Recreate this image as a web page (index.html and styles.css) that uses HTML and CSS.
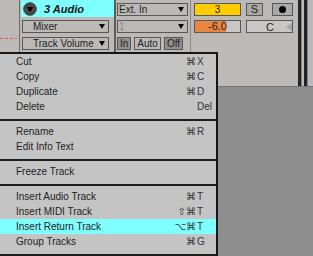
FILE: index.html
```html
<!DOCTYPE html>
<html lang="en">
<head>
    <meta charset="UTF-8">
    <meta name="viewport" content="width=device-width, initial-scale=1.0">
    <title>Track Context Menu</title>
    <link rel="stylesheet" href="styles.css">
</head>
<body>
    <div class="top">
        <div class="gutter">
            <div class="dashes"></div>
        </div>

        <div class="track">
            <div class="track-head">
                <svg class="fold" width="14" height="14" viewBox="0 0 14 14">
                    <circle cx="7" cy="7" r="6.3" fill="#4a4a4a" stroke="#2a2a2a" stroke-width="0.8"/>
                    <path d="M3.6 5 L10.4 5 L7 10 Z" fill="#000"/>
                </svg>
                <span class="track-name">3 Audio</span>
            </div>
            <div class="dd dd-indent">Mixer<span class="arrow"></span></div>
            <div class="dd dd-indent">Track Volume<span class="arrow"></span></div>
        </div>

        <div class="io">
            <div class="dd">Ext. In<span class="arrow"></span></div>
            <div class="dd dd-off">1<span class="arrow"></span></div>
            <div class="monitor">
                <span class="mon-btn mon-on">In</span>
                <span class="mon-btn">Auto</span>
                <span class="mon-btn mon-on">Off</span>
            </div>
        </div>

        <div class="mix">
            <div class="mix-row">
                <div class="num">3</div>
                <div class="btn solo">S</div>
                <div class="btn rec"><span class="dot"></span></div>
            </div>
            <div class="mix-row">
                <div class="vol" style="--fill: 68%">-6.0</div>
                <div class="pan">C<span class="pan-tri"></span></div>
            </div>
        </div>

        <div class="meter">
            <div class="bar"></div>
            <div class="bar"></div>
        </div>
    </div>

    <div class="menu">
        <div class="item"><span class="label">Cut</span><span class="mods">⌘</span><span class="key">X</span></div>
        <div class="item"><span class="label">Copy</span><span class="mods">⌘</span><span class="key">C</span></div>
        <div class="item"><span class="label">Duplicate</span><span class="mods">⌘</span><span class="key">D</span></div>
        <div class="item"><span class="label">Delete</span><span class="mods"></span><span class="key">Del</span></div>
        <div class="sep"></div>
        <div class="item"><span class="label">Rename</span><span class="mods">⌘</span><span class="key">R</span></div>
        <div class="item"><span class="label">Edit Info Text</span></div>
        <div class="sep"></div>
        <div class="item"><span class="label">Freeze Track</span></div>
        <div class="sep"></div>
        <div class="item"><span class="label">Insert Audio Track</span><span class="mods">⌘</span><span class="key">T</span></div>
        <div class="item"><span class="label">Insert MIDI Track</span><span class="mods">⇧⌘</span><span class="key">T</span></div>
        <div class="item active"><span class="label">Insert Return Track</span><span class="mods">⌥⌘</span><span class="key">T</span></div>
        <div class="item"><span class="label">Group Tracks</span><span class="mods">⌘</span><span class="key">G</span></div>
        <div class="sep"></div>
    </div>
</body>
</html>
```

FILE: styles.css
```css
* {
    box-sizing: border-box;
}
body {
    margin: 0;
    width: 313px;
    height: 256px;
    overflow: hidden;
    position: relative;
    background-color: #8e8e8e;
    font-family: "Liberation Sans", Arial, "DejaVu Sans", sans-serif;
    font-size: 10px;
    color: #1e1e1e;
}
.top {
    display: flex;
    height: 87px;
    background-color: #bdb9b6;
    border-bottom: 1px solid #767676;
}
.gutter {
    width: 20px;
    border-right: 1px solid #6c6c6c;
    padding-top: 38px;
}
.dashes {
    width: 17px;
    height: 1px;
    background: repeating-linear-gradient(90deg, #e35a5a 0 3px, transparent 3px 5px);
}
.track {
    width: 96px;
    padding-left: 1px;
    border-right: 2px solid #5c5c5c;
}
.track-head {
    display: flex;
    align-items: center;
    height: 17px;
    background-color: #80ffff;
    padding-left: 2px;
}
.track-name {
    margin-left: 7px;
    font-size: 11px;
    font-weight: bold;
    font-style: italic;
    color: #111;
}
.dd {
    display: flex;
    align-items: center;
    height: 13px;
    margin-top: 4px;
    margin-left: 1px;
    width: 71px;
    padding: 0 3px 0 1px;
    border: 1px solid #585858;
    line-height: 11px;
}
.io .dd:first-child {
    margin-top: 3px;
}
.track .dd {
    margin-left: 1px;
    width: 87px;
    margin-top: 3px;
}
.track .dd + .dd {
    margin-top: 4px;
}
.dd-indent {
    padding-left: 10px;
}
.arrow {
    margin-left: auto;
    width: 0;
    height: 0;
    border-left: 3.5px solid transparent;
    border-right: 3.5px solid transparent;
    border-top: 5px solid #000;
}
.dd-off {
    color: #8a8886;
}
.io {
    width: 75px;
    border-right: 1px solid #8c8986;
}
.monitor {
    display: flex;
    gap: 3px;
    margin: 4px 0 0 1px;
}
.mon-btn {
    height: 13px;
    line-height: 11px;
    padding: 0 2px;
    border: 1px solid #585858;
}
.mon-on {
    background-color: #8f8f8f;
}
.mix {
    width: 107px;
    padding: 3px 0 0 3px;
}
.mix-row {
    display: flex;
    gap: 5px;
    margin-bottom: 4px;
}
.num {
    width: 47px;
    height: 13px;
    line-height: 11px;
    text-align: center;
    background-color: #ffcc00;
    border: 1px solid #585858;
}
.btn {
    height: 13px;
    line-height: 11px;
    text-align: center;
    border: 1px solid #585858;
    background-color: #a9a9a9;
}
.solo {
    width: 17px;
    font-size: 11px;
}
.rec {
    width: 21px;
    margin-left: 4px;
    display: flex;
    align-items: center;
    justify-content: center;
}
.dot {
    width: 7px;
    height: 7px;
    border-radius: 50%;
    background-color: #000;
}
.vol {
    width: 47px;
    height: 13px;
    line-height: 11px;
    font-size: 11px;
    text-align: center;
    border: 1px solid #585858;
    background: linear-gradient(90deg, #ea8640 var(--fill), #c9c6c3 var(--fill));
}
.pan {
    display: flex;
    align-items: center;
    width: 47px;
    height: 13px;
    font-size: 11px;
    border: 1px solid #585858;
    background-color: #c9c7c5;
    padding-left: 19px;
}
.pan-tri {
    margin-left: auto;
    width: 0;
    height: 0;
    border-top: 4px solid transparent;
    border-bottom: 4px solid transparent;
    border-right: 6px solid #a4a4a4;
}
.meter {
    display: flex;
    gap: 2px;
}
.bar {
    width: 4px;
    background-color: #1f242b;
    border-right: 1px solid #7f8388;
}
.menu {
    position: absolute;
    left: -4px;
    top: 52px;
    width: 222px;
    background-color: #c4c4c4;
    border: 2px solid #161616;
}
.item {
    display: flex;
    height: 15px;
    line-height: 15px;
    padding-left: 18px;
}
.label {
    flex: 1;
}
.mods {
    text-align: right;
    padding-right: 1px;
    color: #333;
}
.key {
    width: 19px;
    color: #333;
}
.active {
    background-color: #80ffff;
}
.sep {
    height: 2px;
    margin: 5px 0 3px;
    background-color: #1c1c1c;
}
```
